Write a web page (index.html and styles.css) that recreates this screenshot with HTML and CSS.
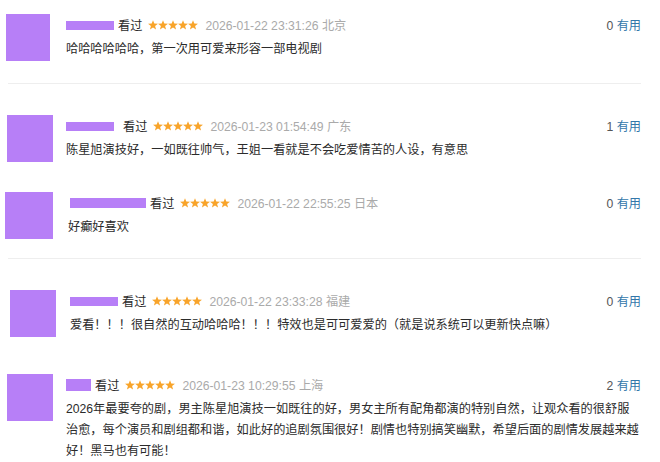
FILE: index.html
```html
<!DOCTYPE html>
<html lang="zh-CN">
<head>
    <meta charset="UTF-8">
    <meta name="viewport" content="width=device-width, initial-scale=1.0">
    <title>短评</title>
    <link rel="stylesheet" href="styles.css">
</head>
<body>
    <svg class="defs" width="0" height="0" aria-hidden="true">
        <defs>
            <polygon id="star" points="5,0.2 6.29,3.62 9.95,3.79 7.09,6.08 8.06,9.61 5,7.6 1.94,9.61 2.91,6.08 0.05,3.79 3.71,3.62"/>
            <g id="stars5">
                <use href="#star" x="0"/>
                <use href="#star" x="10"/>
                <use href="#star" x="20"/>
                <use href="#star" x="30"/>
                <use href="#star" x="40"/>
            </g>
        </defs>
    </svg>

    <div class="comments">
        <div class="comment comment--one">
            <div class="avatar"></div>
            <div class="comment-body">
                <div class="comment-info">
                    <span class="meta">
                        <span class="name name--mid"></span>
                        <span class="watched">看过</span>
                        <svg class="stars" viewBox="0 0 50 10"><use href="#stars5"/></svg>
                        <span class="time">2026-01-22 23:31:26 北京</span>
                    </span>
                    <span class="votes">0 <a class="useful" href="#">有用</a></span>
                </div>
                <p class="comment-text">哈哈哈哈哈哈，第一次用可爱来形容一部电视剧</p>
            </div>
        </div>

        <hr class="divider divider--one">

        <div class="comment comment--two">
            <div class="avatar"></div>
            <div class="comment-body">
                <div class="comment-info">
                    <span class="meta">
                        <span class="name name--mid"></span>
                        <span class="watched watched--wide">看过</span>
                        <svg class="stars" viewBox="0 0 50 10"><use href="#stars5"/></svg>
                        <span class="time">2026-01-23 01:54:49 广东</span>
                    </span>
                    <span class="votes">1 <a class="useful" href="#">有用</a></span>
                </div>
                <p class="comment-text">陈星旭演技好，一如既往帅气，王姐一看就是不会吃爱情苦的人设，有意思</p>
            </div>
        </div>

        <div class="comment comment--three">
            <div class="avatar"></div>
            <div class="comment-body">
                <div class="comment-info">
                    <span class="meta">
                        <span class="name name--long"></span>
                        <span class="watched">看过</span>
                        <svg class="stars" viewBox="0 0 50 10"><use href="#stars5"/></svg>
                        <span class="time">2026-01-22 22:55:25 日本</span>
                    </span>
                    <span class="votes">0 <a class="useful" href="#">有用</a></span>
                </div>
                <p class="comment-text">好癫好喜欢</p>
            </div>
        </div>

        <hr class="divider divider--two">

        <div class="comment comment--four">
            <div class="avatar"></div>
            <div class="comment-body">
                <div class="comment-info">
                    <span class="meta">
                        <span class="name name--mid"></span>
                        <span class="watched">看过</span>
                        <svg class="stars" viewBox="0 0 50 10"><use href="#stars5"/></svg>
                        <span class="time">2026-01-22 23:33:28 福建</span>
                    </span>
                    <span class="votes">0 <a class="useful" href="#">有用</a></span>
                </div>
                <p class="comment-text">爱看！！！很自然的互动哈哈哈！！！特效也是可可爱爱的（就是说系统可以更新快点嘛）</p>
            </div>
        </div>

        <div class="comment comment--five">
            <div class="avatar"></div>
            <div class="comment-body">
                <div class="comment-info">
                    <span class="meta">
                        <span class="name name--short"></span>
                        <span class="watched">看过</span>
                        <svg class="stars" viewBox="0 0 50 10"><use href="#stars5"/></svg>
                        <span class="time">2026-01-23 10:29:55 上海</span>
                    </span>
                    <span class="votes">2 <a class="useful" href="#">有用</a></span>
                </div>
                <p class="comment-text">2026年最要夸的剧，男主陈星旭演技一如既往的好，男女主所有配角都演的特别自然，让观众看的很舒服治愈，每个演员和剧组都和谐，如此好的追剧氛围很好！剧情也特别搞笑幽默，希望后面的剧情发展越来越好！黑马也有可能！</p>
            </div>
        </div>
    </div>
</body>
</html>
```

FILE: styles.css
```css
body {
    margin: 0;
    padding: 0;
    background-color: #fff;
    font-family: "Liberation Sans", "Noto Sans CJK SC", sans-serif;
    font-size: 12.2px;
    color: #2b2b2b;
}

.defs {
    position: absolute;
    width: 0;
    height: 0;
}

.comments {
    padding: 14px 19px 0 0;
}

.comment {
    display: flex;
    align-items: flex-start;
    margin-top: 31px;
    padding-left: 7px;
    gap: 13px;
}

.comment--one {
    margin-top: 0;
    padding-left: 6px;
    gap: 16px;
}

.comment--three {
    margin-top: 30px;
    padding-left: 5px;
    gap: 15px;
}

.comment--four {
    padding-left: 10px;
    gap: 14px;
}

.comment--five {
    margin-top: 37px;
}

.avatar {
    flex: none;
    width: 46px;
    height: 47px;
    background-color: #b77ff7;
}

.comment--one .avatar {
    width: 44px;
}

.comment--three .avatar {
    width: 48px;
}

.comment-body {
    flex: 1;
    min-width: 0;
}

.comment-info {
    display: flex;
    justify-content: space-between;
    align-items: center;
    height: 22px;
}

.meta {
    display: flex;
    align-items: center;
}

.name {
    display: inline-block;
    height: 9px;
    background-color: #b77ff7;
}

.name--short {
    width: 25px;
    height: 12px;
}

.name--mid {
    width: 48px;
}

.name--long {
    width: 76px;
    height: 10px;
    margin-left: 2px;
}

.watched {
    margin-left: 4px;
    color: #2b2b2b;
}

.watched--wide {
    margin-left: 9px;
}

.stars {
    width: 50px;
    height: 10px;
    margin-left: 6px;
    fill: #f8a42a;
}

.time {
    margin-left: 7px;
    color: #aaa;
}

.votes {
    color: #555;
}

.useful {
    color: #3377aa;
    text-decoration: none;
}

.comment-text {
    margin: 3px 0 0;
    line-height: 21px;
    color: #2b2b2b;
}

.divider {
    margin: 22px 0 0 8px;
    border: 0;
    border-top: 1px solid #eee;
}

.divider--two {
    margin-top: 19px;
}
```
